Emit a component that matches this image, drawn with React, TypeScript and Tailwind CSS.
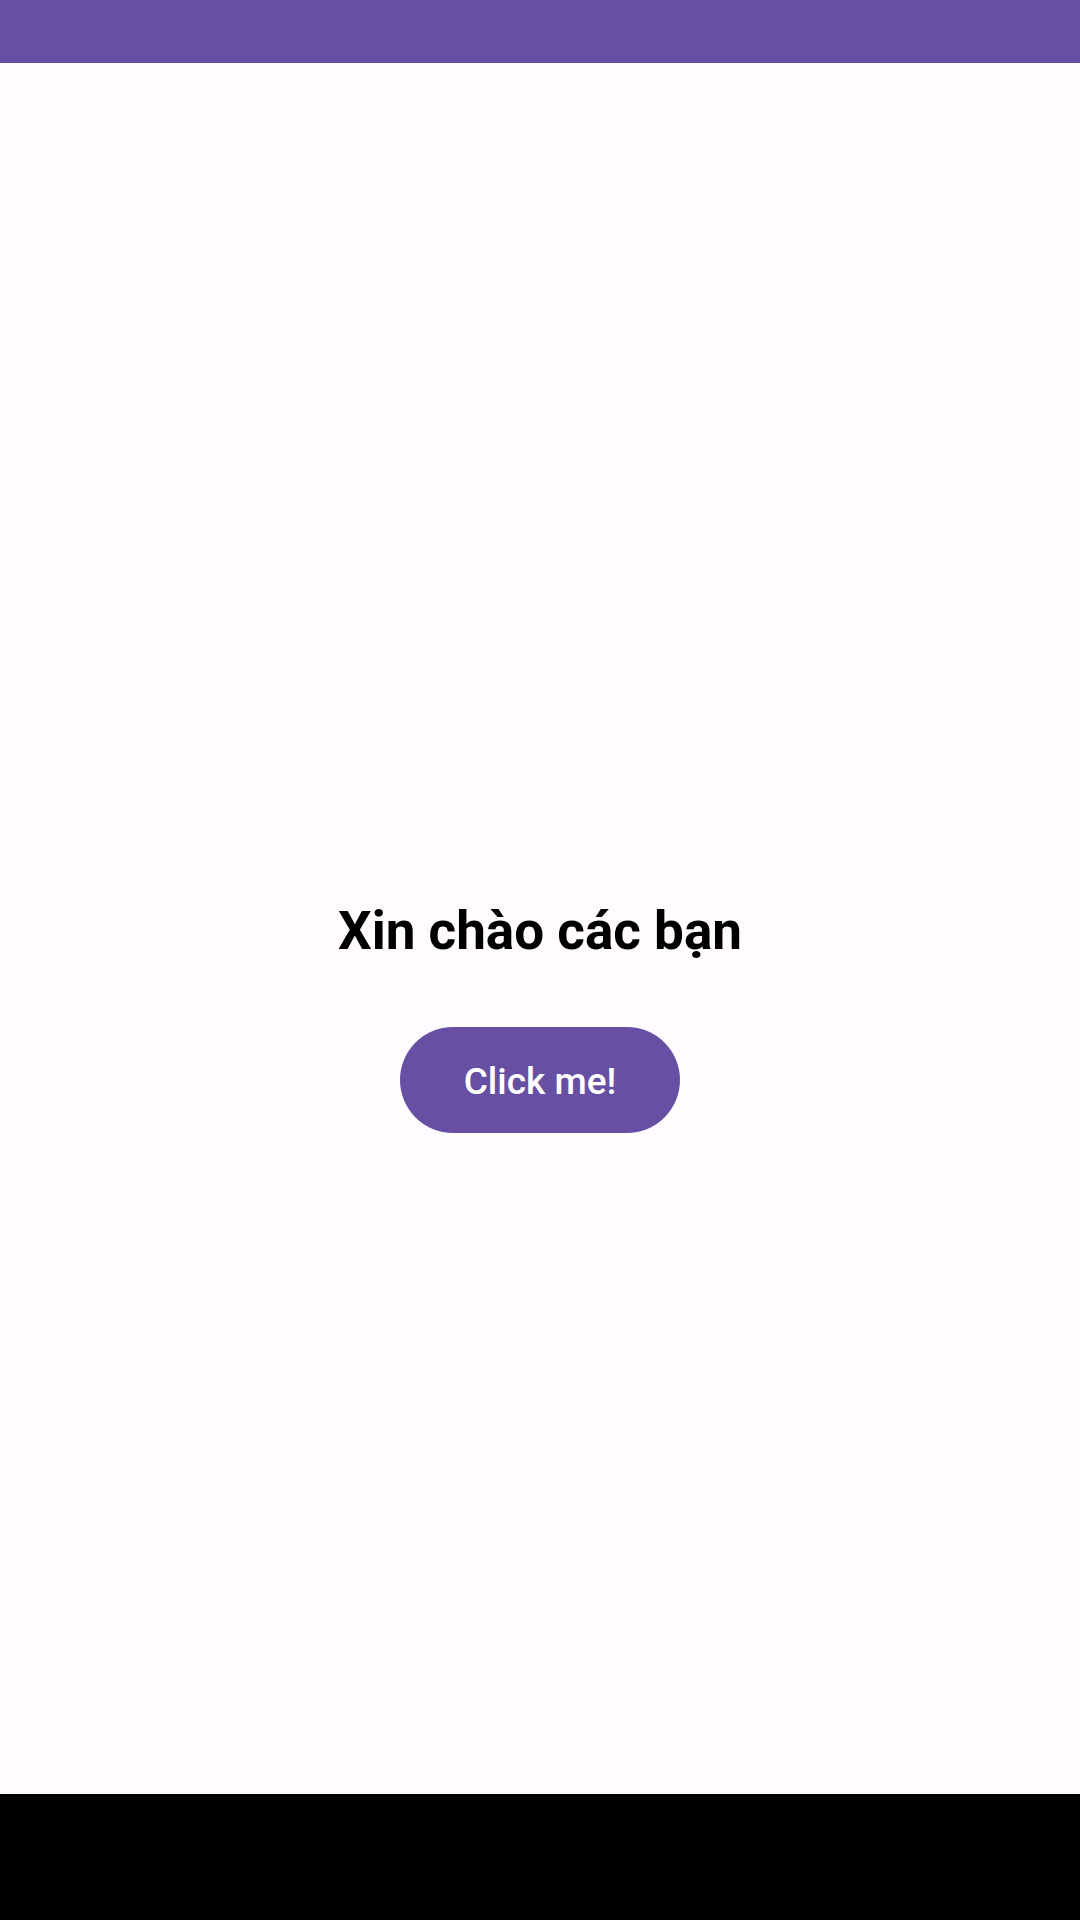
function App(): JSX.Element {
  return (
    <div className="w-[1080px] h-[1920px] flex flex-col bg-[#fffbfe] font-['Roboto',sans-serif]">
      {/* top bar */}
      <div className="h-[63px] w-full bg-[#6750a4]" />

      <div className="flex-1 flex flex-col items-center pt-[837px]">
        <h1 className="text-[53px] leading-[62px] font-bold text-black">Xin chào các bạn</h1>
        <button className="mt-[65px] w-[280px] h-[106px] pt-[3px] rounded-full bg-[#6750a4] text-white text-[37px] font-medium leading-none">
          Click me!
        </button>
      </div>

      {/* nav bar */}
      <div className="h-[126px] w-full bg-black" />
    </div>
  );
}

export default App;
